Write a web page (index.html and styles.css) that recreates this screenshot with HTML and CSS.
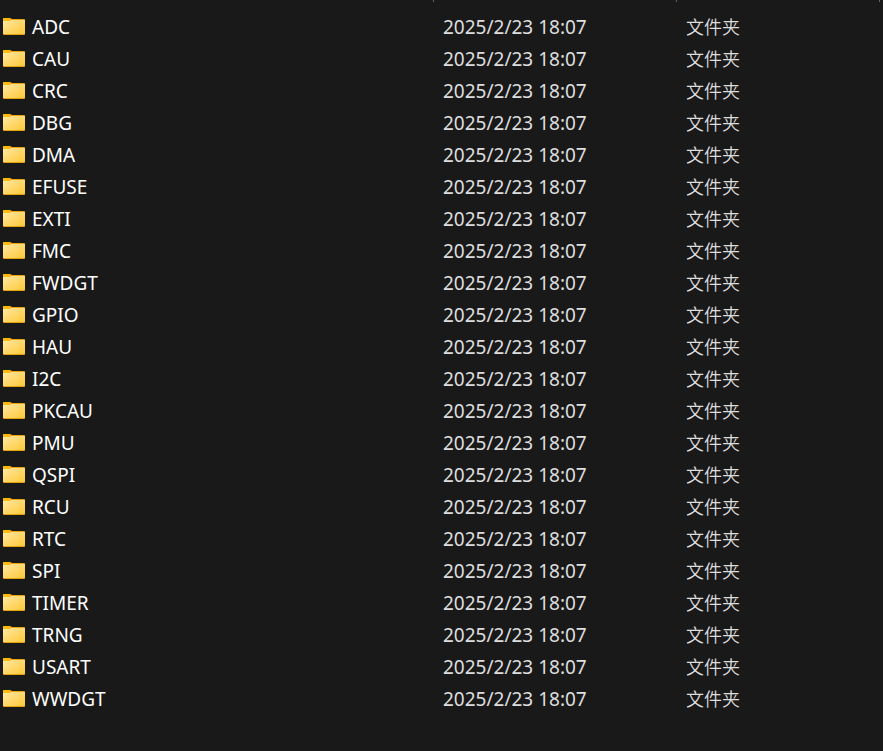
FILE: index.html
```html
<!DOCTYPE html>
<html lang="zh-CN">
  <head>
    <meta charset="UTF-8" />
    <meta name="viewport" content="width=device-width, initial-scale=1.0" />
    <link rel="stylesheet" href="styles.css">
  </head>
  <body>
    <svg class="sprite" width="0" height="0">
      <defs>
        <linearGradient id="front" x1="0" y1="0" x2="1" y2="1">
          <stop offset="0" stop-color="#ffe8a3" />
          <stop offset="1" stop-color="#ffc938" />
        </linearGradient>
      </defs>
      <symbol id="folder" viewBox="0 0 22 18">
        <path d="M0 1Q0 0 1 0H7L9 1H21Q22 1 22 2V16Q22 17 21 17H1Q0 17 0 16Z" fill="#e9a114" />
        <path d="M0 1Q0 0 1 0H7L8 1V2L7 3H0Z" fill="#fdb913" />
        <path d="M0 3H7L8 2H22V15Q22 16 21 16H1Q0 16 0 15Z" fill="url(#front)" />
      </symbol>
    </svg>
    <table class="file-list">
      <colgroup>
        <col class="col-name" />
        <col class="col-date" />
        <col class="col-type" />
        <col />
      </colgroup>
      <thead>
        <tr>
          <th></th>
          <th></th>
          <th></th>
          <td></td>
        </tr>
      </thead>
      <tbody id="files"></tbody>
    </table>

    <script src="script.js"></script>
  </body>
</html>
```
FILE: styles.css
```css
body {
  font-family: "Noto Sans", "Noto Sans CJK SC", sans-serif;
  font-size: 19px;
  line-height: 32px;
  background-color: #191919;
  color: #dedede;
  margin: 0;
}

.sprite {
  position: absolute;
}

.file-list {
  width: 100%;
  table-layout: fixed;
  border-collapse: collapse;
}

.col-name {
  width: 434px;
}

.col-date {
  width: 243px;
}

.col-type {
  width: 203px;
}

th,
td {
  padding: 0;
  text-align: left;
  white-space: nowrap;
}

thead tr {
  height: 11px;
}

/* column separators */
th {
  background: linear-gradient(#636363, #636363) right top / 1px 2px no-repeat;
}

tbody td {
  height: 32px;
  padding-left: 9px;
}

tbody .name {
  padding-left: 3px;
  color: #fff;
}

.name-box {
  display: flex;
  align-items: center;
  gap: 7px;
}

.icon {
  width: 22px;
  height: 18px;
}

tbody .type {
  height: 30px;
  padding-bottom: 2px;
  font-family: "Noto Sans CJK SC", sans-serif;
  font-size: 18px;
  font-weight: 350;
  line-height: 30px;
}
```
FILE: script.js
```js
const folders = [
  "ADC", "CAU", "CRC", "DBG", "DMA", "EFUSE", "EXTI", "FMC",
  "FWDGT", "GPIO", "HAU", "I2C", "PKCAU", "PMU", "QSPI", "RCU",
  "RTC", "SPI", "TIMER", "TRNG", "USART", "WWDGT",
];

document.getElementById("files").innerHTML = folders
  .map(
    (name) => `
      <tr>
        <td class="name">
          <div class="name-box">
            <svg class="icon"><use href="#folder" /></svg>
            <span>${name}</span>
          </div>
        </td>
        <td>2025/2/23 18:07</td>
        <td class="type">文件夹</td>
      </tr>`
  )
  .join("");
```
